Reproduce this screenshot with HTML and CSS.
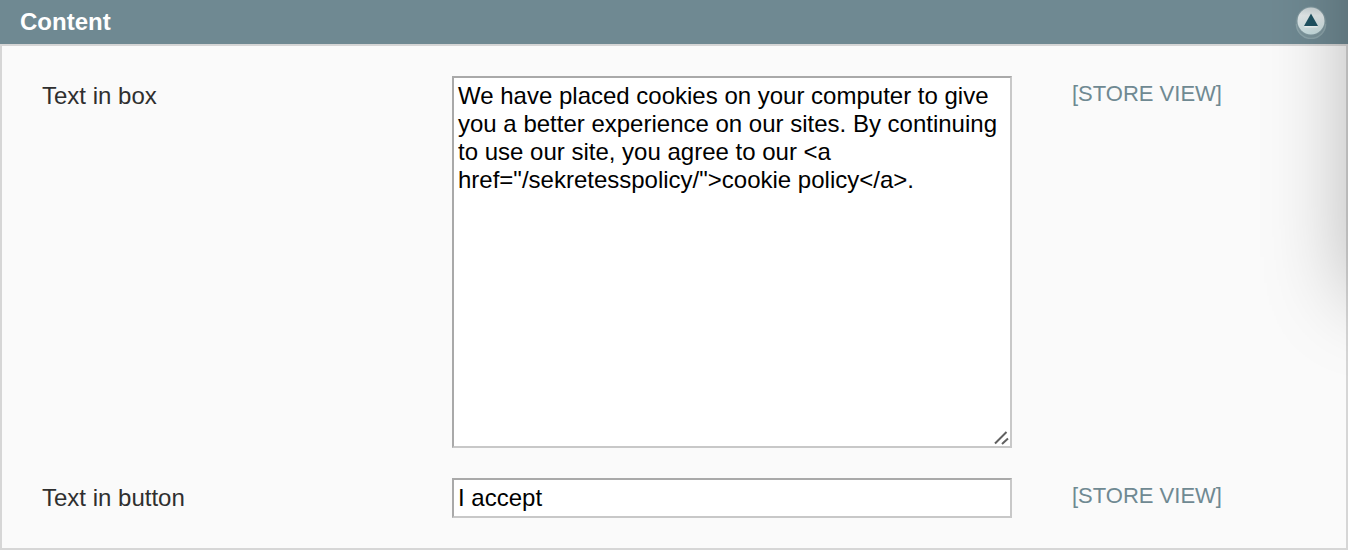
FILE: index.html
```
<!DOCTYPE html>
<html lang="en">
<head>
<meta charset="utf-8">
<title>Content</title>
<link rel="stylesheet" href="styles.css">
</head>
<body>
<main class="section">
  <header class="section-head">
    <h1 class="section-title">Content</h1>
    <button class="toggle" type="button" aria-label="Collapse section" aria-expanded="true">
      <svg class="toggle-icon" viewBox="0 0 34 34" aria-hidden="true">
        <defs>
          <linearGradient id="disc" x1="0" y1="0" x2="0" y2="1">
            <stop offset="0" stop-color="#c9d3d5"/>
            <stop offset="0.3" stop-color="#e2e8e9"/>
            <stop offset="1" stop-color="#c5dcde"/>
          </linearGradient>
        </defs>
        <circle cx="17" cy="18" r="15.500" fill="#7b949b"/>
        <path d="M2.500 19a14.500 14.500 0 0 0 29 0" fill="none" stroke="#8ba3a9" stroke-width="1.500"/>
        <circle cx="17" cy="16" r="14.500" fill="#8199a0"/>
        <circle cx="17" cy="16" r="13.500" fill="url(#disc)"/>
        <path d="M10.500 21.500H23.500" stroke="#eef4f4" stroke-width="2"/>
        <path d="M17 8.500L24 21H10Z" fill="#1f5363"/>
      </svg>
    </button>
  </header>
  <form class="panel">
    <div class="row">
      <label class="label" for="box-text">Text in box</label>
      <div class="field">
        <textarea class="control area" id="box-text" rows="13" spellcheck="false">We have placed cookies on your computer to give you a better experience on our sites. By continuing to use our site, you agree to our &lt;a href="/sekretesspolicy/"&gt;cookie policy&lt;/a&gt;.</textarea>
        <svg class="grip" viewBox="0 0 16 16" aria-hidden="true">
          <path d="M1 13.500L12.500 2M8 14L14 8.500" fill="none" stroke="#606060" stroke-width="2"/>
        </svg>
      </div>
      <span class="scope">[STORE VIEW]</span>
    </div>
    <div class="row">
      <label class="label" for="button-text">Text in button</label>
      <div class="field">
        <input class="control line" id="button-text" type="text" value="I accept">
      </div>
      <span class="scope">[STORE VIEW]</span>
    </div>
  </form>
</main>
</body>
</html>
```
FILE: styles.css
```
* {
  box-sizing: border-box;
}

body {
  margin: 0;
  background: #fafafa;
  font-family: "Liberation Sans", Arial, sans-serif;
  font-size: 24px;
  line-height: 28px;
  color: #2f2f2f;
}

.section {
  position: relative;
  overflow: hidden;
}

.section::after {
  content: "";
  position: absolute;
  top: -200px;
  left: 100%;
  width: 200px;
  height: 496px;
  box-shadow: 0 0 84px rgba(0, 0, 0, 0.27);
  pointer-events: none;
}

.section-head {
  display: flex;
  align-items: center;
  justify-content: space-between;
  height: 44px;
  padding: 0 20px;
  background: #6f8992;
}

.section-title {
  margin: 0;
  font-size: 24px;
  line-height: 28px;
  color: #fff;
}

.toggle {
  display: block;
  padding: 0;
  border: 0;
  background: none;
  cursor: pointer;
}

.toggle-icon {
  display: block;
  width: 34px;
  height: 34px;
}

.panel {
  display: grid;
  gap: 30px;
  padding: 30px 40px;
  border: 2px solid #d6d6d6;
  background: #fafafa;
}

.row {
  display: grid;
  grid-template-columns: 410px 560px 1fr;
  align-items: start;
}

.label {
  padding-top: 6px;
}

.field {
  position: relative;
}

.control {
  display: block;
  width: 100%;
  margin: 0;
  border: 2px solid;
  border-color: #a9a9a9 #c8c8c8 #c8c8c8 #a9a9a9;
  border-radius: 0;
  background: #fff;
  font: inherit;
  color: #000;
  outline: 0;
}

.area {
  padding: 4px 4px 0;
  overflow: auto;
  resize: vertical;
}

.area::-webkit-resizer {
  background: transparent;
}

.line {
  height: 40px;
  padding: 2px 4px;
}

.grip {
  position: absolute;
  right: 2px;
  bottom: 2px;
  width: 16px;
  height: 16px;
  pointer-events: none;
}

.scope {
  padding: 4px 0 0 60px;
  font-size: 22px;
  color: #6f8992;
}
```
